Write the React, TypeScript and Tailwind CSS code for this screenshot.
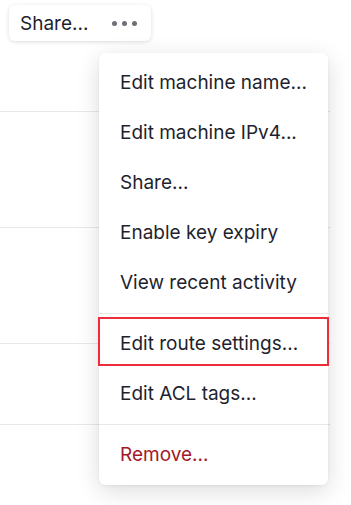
import React from "react";

const items1 = [
  "Edit machine name...",
  "Edit machine IPv4...",
  "Share...",
  "Enable key expiry",
  "View recent activity",
];

export default function App() {
  return (
    <div
      className="relative w-[351px] h-[505px] bg-white overflow-hidden text-[#1f1f2e]"
      style={{ fontFamily: "Inter, 'Noto Sans', sans-serif" }}
    >
      <div className="flex flex-col w-[330px]">
        <div className="h-[112px] border-b border-[#e8e8e8] pt-[5px] pl-[9px]">
          <div className="flex items-center w-[142px] h-[36px] rounded-[6px] bg-white shadow-[0_1px_4px_rgba(0,0,0,0.14)] pl-[11px] pr-[14px]">
            <span className="text-[19px] leading-none">Share...</span>
            <span className="ml-auto flex gap-[5px] items-center">
              <span className="w-[5px] h-[5px] rounded-full bg-[#6e7076]" />
              <span className="w-[5px] h-[5px] rounded-full bg-[#6e7076]" />
              <span className="w-[5px] h-[5px] rounded-full bg-[#6e7076]" />
            </span>
          </div>
        </div>
        <div className="h-[116px] border-b border-[#e8e8e8]" />
        <div className="h-[116px] border-b border-[#e8e8e8]" />
        <div className="h-[81px] border-b border-[#e8e8e8]" />
      </div>

      <div className="absolute left-[99px] top-[53px] w-[229px] rounded-[6px] bg-white shadow-[0_6px_24px_rgba(0,0,0,0.14),0_1px_3px_rgba(0,0,0,0.06)] py-[5px]">
        {items1.map((t) => (
          <div key={t} className="h-[50px] flex items-center pl-[21px] text-[19px]">
            {t}
          </div>
        ))}
        <div className="my-[5px] h-px bg-[#e8e8e8]" />
        <div className="relative h-[50px] flex items-center pl-[21px] text-[19px]">
          Edit route settings...
          <div className="absolute left-[-1px] right-[-1px] top-[-2px] h-[49px] border-2 border-[#ee2b38]" />
        </div>
        <div className="h-[50px] flex items-center pl-[21px] text-[19px]">Edit ACL tags...</div>
        <div className="my-[5px] h-px bg-[#e8e8e8]" />
        <div className="h-[50px] flex items-center pl-[21px] text-[19px] text-[#a3182b]">Remove...</div>
      </div>
    </div>
  );
}
